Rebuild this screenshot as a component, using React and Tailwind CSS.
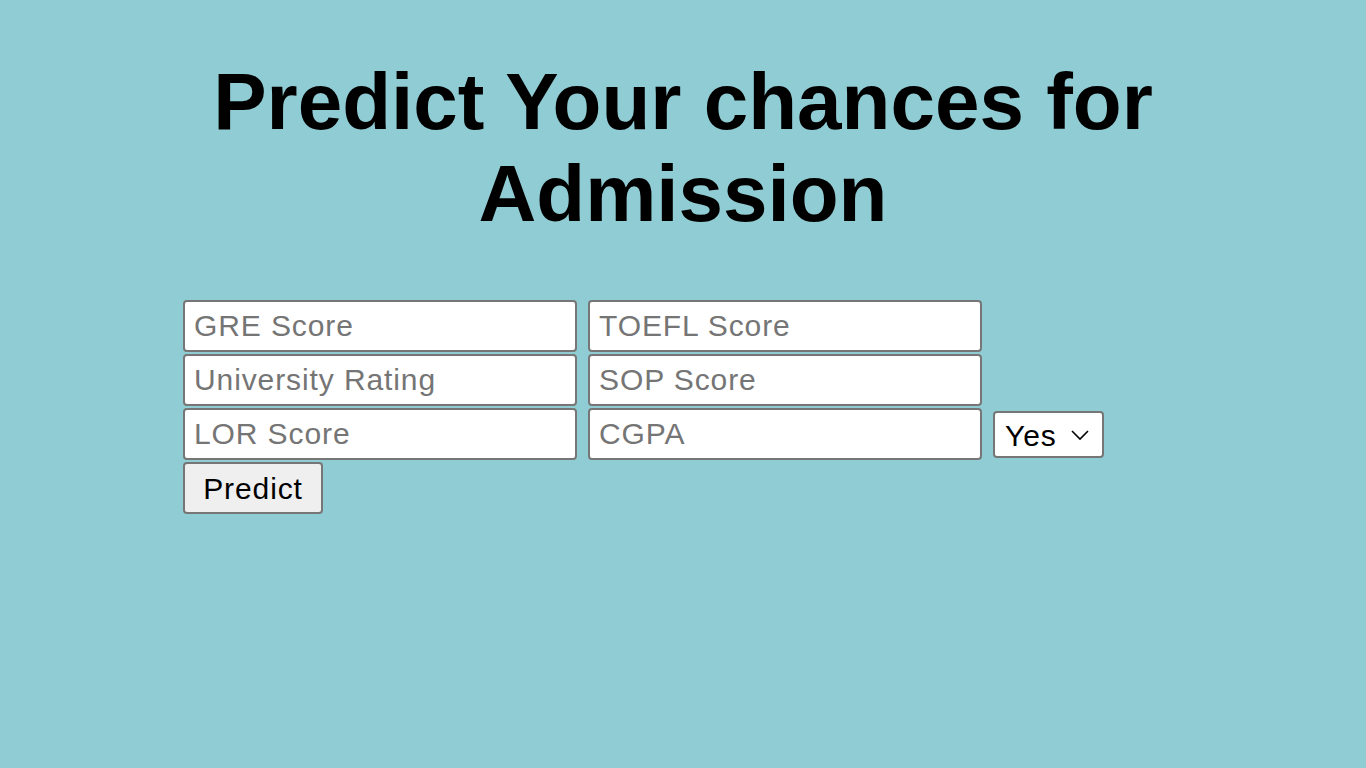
import React, { useState } from "react";

const fields = [
  ["GRE Score", "TOEFL Score"],
  ["University Rating", "SOP Score"],
  ["LOR Score", "CGPA"],
];

const inputClass =
  "w-[394px] h-[52px] box-border bg-white border-2 border-[#767676] rounded-[4px] pl-[9px] pr-2 text-[30px] tracking-[0.9px] text-black placeholder:text-[#757575] outline-none";

const App = () => {
  const [research, setResearch] = useState("1");

  return (
    <div className="min-h-screen w-full bg-[#90ccd4] font-['Liberation_Sans',Arial,sans-serif]">
      <h1 className="pt-[56px] text-center text-[80px] leading-[92px] font-bold text-black px-[200px]">
        Predict Your chances for Admission
      </h1>

      <form
        className="ml-[183px] mt-[60px] flex flex-col gap-[2px]"
        onSubmit={(e) => e.preventDefault()}
      >
        {fields.map((row, i) => (
          <div key={i} className="flex items-center gap-[11px]">
            {row.map((name) => (
              <input key={name} type="text" placeholder={name} className={inputClass} />
            ))}
            {i === 2 && (
              <div className="relative">
                <select
                  value={research}
                  onChange={(e) => setResearch(e.target.value)}
                  className="appearance-none w-[111px] h-[47px] box-border bg-white border-2 border-[#767676] rounded-[4px] pl-[10px] text-[30px] tracking-[0.9px] text-black outline-none"
                >
                  <option value="1">Yes</option>
                  <option value="0">No</option>
                </select>
                <svg
                  className="absolute right-[14px] top-[18px] pointer-events-none"
                  width="20"
                  height="12"
                  viewBox="0 0 20 12"
                  fill="none"
                >
                  <path d="M2 2 L10 10 L18 2" stroke="#000" strokeWidth="1.6" />
                </svg>
              </div>
            )}
          </div>
        ))}
        <div>
          <button
            type="submit"
            className="w-[140px] h-[52px] box-border bg-[#efefef] border-2 border-[#767676] rounded-[4px] text-[30px] tracking-[0.9px] text-black"
          >
            Predict
          </button>
        </div>
      </form>
    </div>
  );
};

export default App;
